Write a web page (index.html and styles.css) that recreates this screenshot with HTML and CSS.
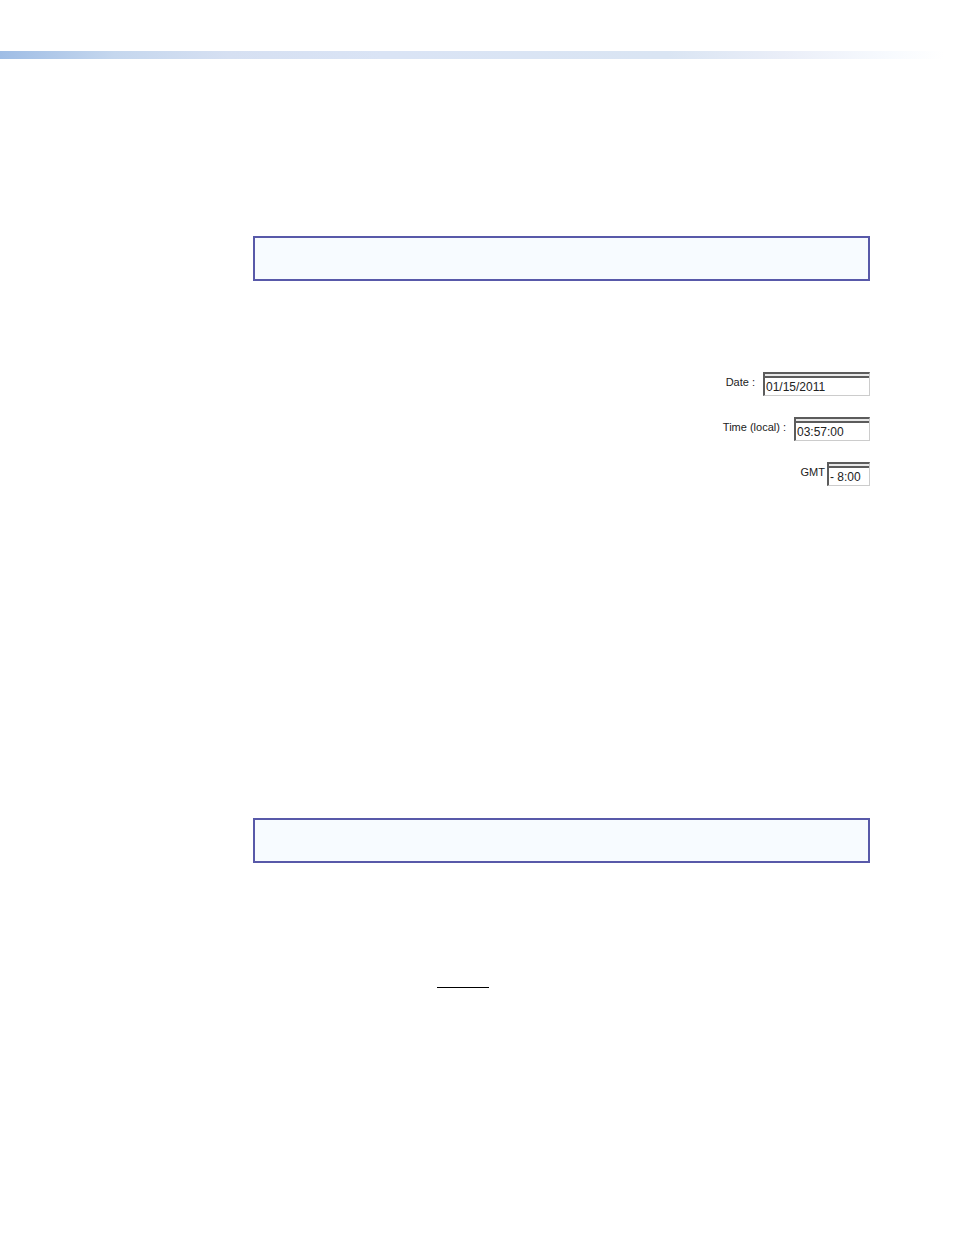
FILE: index.html
```html
<!DOCTYPE html>
<html lang="en">
<head>
<meta charset="utf-8">
<meta name="viewport" content="width=device-width, initial-scale=1">
<title>Date and time</title>
<link rel="stylesheet" href="styles.css">
</head>
<body>
<div class="page-band"></div>
<main class="content">
  <div class="note"></div>
  <form class="fields">
    <div class="field">
      <label class="field-label" for="date">Date :</label>
      <div class="field-frame date-frame"><input class="field-input" id="date" type="text" value="01/15/2011"></div>
    </div>
    <div class="field">
      <label class="field-label" for="time">Time (local) :</label>
      <div class="field-frame time-frame"><input class="field-input" id="time" type="text" value="03:57:00"></div>
    </div>
    <div class="field field-tight">
      <label class="field-label" for="gmt">GMT</label>
      <div class="field-frame gmt-frame"><input class="field-input" id="gmt" type="text" value="- 8:00"></div>
    </div>
  </form>
  <div class="note note-lower"></div>
  <hr class="rule">
</main>
</body>
</html>
```

FILE: styles.css
```css
* {
  box-sizing: border-box;
}

body {
  margin: 0;
  background: #fff;
  color: #222;
  font-family: "Liberation Sans", Arial, sans-serif;
}

.page-band {
  height: 8px;
  margin-top: 51px;
  background: linear-gradient(to right, #9fbde5 0%, #c5d7ee 12%, #d6e0f2 24%, #dae4f5 40%, #dae5f3 70%, #eaeef8 82%, #f7fafe 93%, #fff 99%);
}

.content {
  padding: 177px 84px 0 253px;
}

.note {
  height: 45px;
  border: 2px solid #5859a9;
  background: #f7fbff;
}

.fields {
  display: flex;
  flex-direction: column;
  align-items: flex-end;
  gap: 21px;
  margin-top: 91px;
}

.field {
  display: flex;
  align-items: flex-start;
  gap: 8px;
}

.field-tight {
  gap: 2px;
}

.field-label {
  padding-top: 3px;
  font-size: 11px;
  line-height: 14px;
}

.field-frame {
  height: 24px;
  padding-top: 2px;
  border-style: solid;
  border-width: 2px 1px 1px 2px;
  border-color: #5c5c5c #ccc #ccc #5c5c5c;
  background: #e8e8e8;
}

.date-frame {
  width: 107px;
}

.time-frame {
  width: 76px;
}

.gmt-frame {
  width: 43px;
}

.field-input {
  display: block;
  width: 100%;
  height: 19px;
  padding: 1px 0 0 1px;
  border: 0;
  border-top: 2px solid #5c5c5c;
  outline: 0;
  background: #fff;
  color: #222;
  font-family: inherit;
  font-size: 12px;
  line-height: 16px;
}

.note-lower {
  margin-top: 332px;
}

.rule {
  width: 52px;
  height: 1px;
  margin: 124px 0 0 184px;
  border: 0;
  background: #000;
}
```
